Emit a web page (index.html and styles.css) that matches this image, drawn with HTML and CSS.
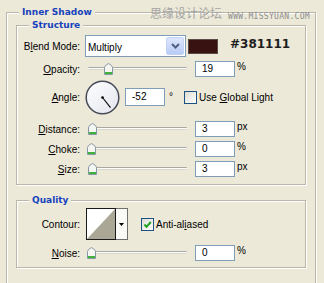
FILE: index.html
```html
<!DOCTYPE html>
<html>
<head>
<meta charset="utf-8">
<link rel="stylesheet" href="styles.css">
</head>
<body>
<div class="watermark"><span class="wm-cn">思缘设计论坛</span><span class="wm-en">WWW.MISSYUAN.COM</span></div>
<div class="group outer">
  <div class="gtitle gtitle-outer">Inner Shadow</div>
  <div class="group box structure">
    <div class="gtitle">Structure</div>
    <div class="row r-blend">
      <span class="lbl">B<u>l</u>end Mode:</span>
      <div class="select"><span class="sel-text">Multiply</span><span class="sel-btn"><svg width="9" height="6" viewBox="0 0 9 6"><polyline points="1,1 4.5,4.5 8,1" fill="none" stroke="#4d6185" stroke-width="2"/></svg></span></div>
      <div class="swatch"></div>
      <div class="hex">#381111</div>
    </div>
    <div class="row r-opacity">
      <span class="lbl"><u>O</u>pacity:</span>
      <div class="slider"><div class="track"></div><svg class="thumb" style="left:19px" width="9" height="12" viewBox="0 0 9 12"><path d="M0.5 4.5 Q0.5 2.5 4.5 0.5 Q8.5 2.5 8.5 4.5 V11.5 H0.5 Z" fill="#f5f5f1" stroke="#8796a4"/><rect x="1" y="9" width="7" height="2" fill="#3cb43c"/></svg></div>
      <div class="num">19</div><span class="unit">%</span>
    </div>
    <div class="row r-angle">
      <span class="lbl"><u>A</u>ngle:</span>
      <svg class="dial" width="35" height="35" viewBox="0 0 35 35">
        <defs><linearGradient id="dg" x1="0" y1="0" x2="1" y2="1"><stop offset="0" stop-color="#ffffff"/><stop offset="1" stop-color="#e3e5ee"/></linearGradient></defs>
        <circle cx="17.5" cy="17.5" r="16.3" fill="url(#dg)" stroke="#474b58" stroke-width="1.5"/>
        <line x1="17.5" y1="17.5" x2="25.5" y2="27.7" stroke="#000" stroke-width="1.1"/>
        <circle cx="17.5" cy="17.5" r="1.3" fill="#000"/>
      </svg>
      <div class="num ang">-52</div><span class="deg">°</span>
      <span class="cb cb-global"></span><span class="cb-text">Use <u>G</u>lobal Light</span>
    </div>
    <div class="row r-dist">
      <span class="lbl"><u>D</u>istance:</span>
      <div class="slider"><div class="track"></div><svg class="thumb" style="left:3px" width="9" height="12" viewBox="0 0 9 12"><path d="M0.5 4.5 Q0.5 2.5 4.5 0.5 Q8.5 2.5 8.5 4.5 V11.5 H0.5 Z" fill="#f5f5f1" stroke="#8796a4"/><rect x="1" y="9" width="7" height="2" fill="#3cb43c"/></svg></div>
      <div class="num">3</div><span class="unit">px</span>
    </div>
    <div class="row r-choke">
      <span class="lbl"><u>C</u>hoke:</span>
      <div class="slider"><div class="track"></div><svg class="thumb" style="left:2px" width="9" height="12" viewBox="0 0 9 12"><path d="M0.5 4.5 Q0.5 2.5 4.5 0.5 Q8.5 2.5 8.5 4.5 V11.5 H0.5 Z" fill="#f5f5f1" stroke="#8796a4"/><rect x="1" y="9" width="7" height="2" fill="#3cb43c"/></svg></div>
      <div class="num">0</div><span class="unit">%</span>
    </div>
    <div class="row r-size">
      <span class="lbl"><u>S</u>ize:</span>
      <div class="slider"><div class="track"></div><svg class="thumb" style="left:3px" width="9" height="12" viewBox="0 0 9 12"><path d="M0.5 4.5 Q0.5 2.5 4.5 0.5 Q8.5 2.5 8.5 4.5 V11.5 H0.5 Z" fill="#f5f5f1" stroke="#8796a4"/><rect x="1" y="9" width="7" height="2" fill="#3cb43c"/></svg></div>
      <div class="num">3</div><span class="unit">px</span>
    </div>
  </div>
  <div class="group box quality">
    <div class="gtitle">Quality</div>
    <div class="row r-contour">
      <span class="lbl">Contour:</span>
      <div class="contour">
        <svg class="contour-prev" width="30" height="32" viewBox="0 0 30 32"><rect x="0" y="0" width="30" height="32" fill="#fff"/><polygon points="1,31 29,1 29,31" fill="#aba796"/><rect x="0.5" y="0.5" width="29" height="31" fill="none" stroke="#1a1a1a"/></svg>
        <span class="contour-arrow"><svg width="5" height="3" viewBox="0 0 5 3"><polygon points="0,0 5,0 2.5,3" fill="#000"/></svg></span>
      </div>
      <span class="cb cb-aa"><svg width="11" height="11" viewBox="0 0 11 11"><polyline points="2.5,5.5 4.5,7.8 8.8,3" fill="none" stroke="#21a121" stroke-width="2"/></svg></span><span class="cb-text">Anti-al<u>i</u>ased</span>
    </div>
    <div class="row r-noise">
      <span class="lbl"><u>N</u>oise:</span>
      <div class="slider"><div class="track"></div><svg class="thumb" style="left:2px" width="9" height="12" viewBox="0 0 9 12"><path d="M0.5 4.5 Q0.5 2.5 4.5 0.5 Q8.5 2.5 8.5 4.5 V11.5 H0.5 Z" fill="#f5f5f1" stroke="#8796a4"/><rect x="1" y="9" width="7" height="2" fill="#3cb43c"/></svg></div>
      <div class="num">0</div><span class="unit">%</span>
    </div>
  </div>
</div>
</body>
</html>
```
FILE: styles.css
```css
* { box-sizing: border-box; }
html, body { margin: 0; padding: 0; }
body {
  background: #ece9d8;
  font-family: "Liberation Sans", Arial, sans-serif;
  font-size: 10px;
  color: #000;
  width: 324px;
  height: 283px;
  overflow: hidden;
  position: relative;
}
u { text-decoration: underline; text-underline-offset: 1px; }

.group {
  border: 1px solid #bab7a8;
  box-shadow: inset 1px 1px 0 #fff, 1px 1px 0 #fff;
}
.outer {
  margin: 12px 0 0 6px;
  width: 310px;
  padding: 0 9px 40px;
}
.gtitle {
  width: max-content;
  height: 13px;
  line-height: 13px;
  margin: -7px 0 0 12px;
  padding: 0 3px;
  background: #ece9d8;
  font-family: "DejaVu Sans", sans-serif;
  font-weight: bold;
  font-size: 9px;
  color: #1742bd;
}
.gtitle-outer { margin-left: 3px; }

.box { width: 290px; }
.structure { margin-top: 6px; padding-bottom: 7px; }
.quality { margin-top: 15px; padding-bottom: 6px; }

.row { display: flex; align-items: center; }
.lbl { width: 63px; flex: none; text-align: right; }

.r-blend { height: 22px; margin-top: 3px; }
.r-opacity { height: 16px; margin-top: 4px; }
.r-angle { height: 34px; margin-top: 3px; }
.r-dist { height: 16px; margin-top: 7px; }
.r-choke, .r-size { height: 16px; margin-top: 4px; }
.r-contour { height: 32px; margin-top: 1px; }
.r-noise { height: 16px; margin-top: 5px; }

.select {
  margin-left: 5px;
  width: 101px;
  height: 22px;
  border: 1px solid #7f9db9;
  background: #fff;
  display: flex;
  align-items: center;
  flex: none;
}
.sel-text { flex: 1; padding-left: 2px; padding-top: 2px; font-size: 10px; }
.sel-btn {
  width: 18px;
  height: 18px;
  margin-right: 1px;
  border: 1px solid #c3d3f8;
  border-radius: 2px;
  background: linear-gradient(#dde6fd, #b9cbf6);
  display: flex;
  align-items: center;
  justify-content: center;
}
.swatch {
  margin-left: 2px;
  width: 30px;
  height: 15px;
  background: #381111;
  border: 1px solid #5c4a48;
  flex: none;
}
.hex {
  margin-left: 12px;
  align-self: flex-start;
  margin-top: 2px;
  line-height: 14px;
  font-family: "DejaVu Sans", sans-serif;
  font-weight: bold;
  font-size: 12px;
  color: #1e1e1e;
}

.slider {
  position: relative;
  margin-left: 5px;
  width: 102px;
  height: 16px;
  flex: none;
}
.track {
  position: absolute;
  left: 3px;
  right: 0;
  top: 6px;
  height: 3px;
  border-top: 1px solid #a9a8a2;
  border-bottom: 1px solid #d9d7cb;
  border-radius: 1px;
  background: #fbfbf8;
}
.thumb { position: absolute; top: 2px; }

.num {
  margin-left: 8px;
  width: 40px;
  height: 16px;
  border: 1px solid #7f9db9;
  background: #fff;
  padding-left: 6px;
  line-height: 14px;
  flex: none;
}
.num.ang { margin-left: 5px; height: 18px; line-height: 16px; }
.unit { margin-left: 2px; align-self: flex-start; line-height: 11px; }
.deg { margin-left: 4px; align-self: flex-start; margin-top: 11px; line-height: 11px; }

.dial { margin-left: 5px; flex: none; }

.cb {
  width: 13px;
  height: 13px;
  border: 1px solid #1c5180;
  background: linear-gradient(135deg, #dcdcd5, #ffffff);
  flex: none;
  display: flex;
  align-items: center;
  justify-content: center;
}
.cb-global { margin-left: 11px; }
.cb-aa { margin-left: 13px; }
.cb-text { margin-left: 2px; }

.contour { margin-left: 6px; display: flex; height: 32px; flex: none; }
.contour-prev { display: block; }
.contour-arrow {
  width: 12px;
  height: 32px;
  border: 1px solid #6f6f6f;
  border-left: none;
  background: #fafaf7;
  display: flex;
  align-items: center;
  justify-content: center;
}

.watermark {
  position: absolute;
  top: 6px;
  left: 150px;
  display: flex;
  align-items: flex-start;
}
.wm-cn {
  font-family: "Noto Sans CJK SC", sans-serif;
  font-size: 12px;
  line-height: 14px;
  color: #a5a5a5;
}
.wm-en {
  margin-left: 6px;
  margin-top: 6px;
  font-family: "DejaVu Sans Mono", monospace;
  font-size: 8px;
  line-height: 9px;
  letter-spacing: 0.3px;
  color: #8e8e8e;
}
```
